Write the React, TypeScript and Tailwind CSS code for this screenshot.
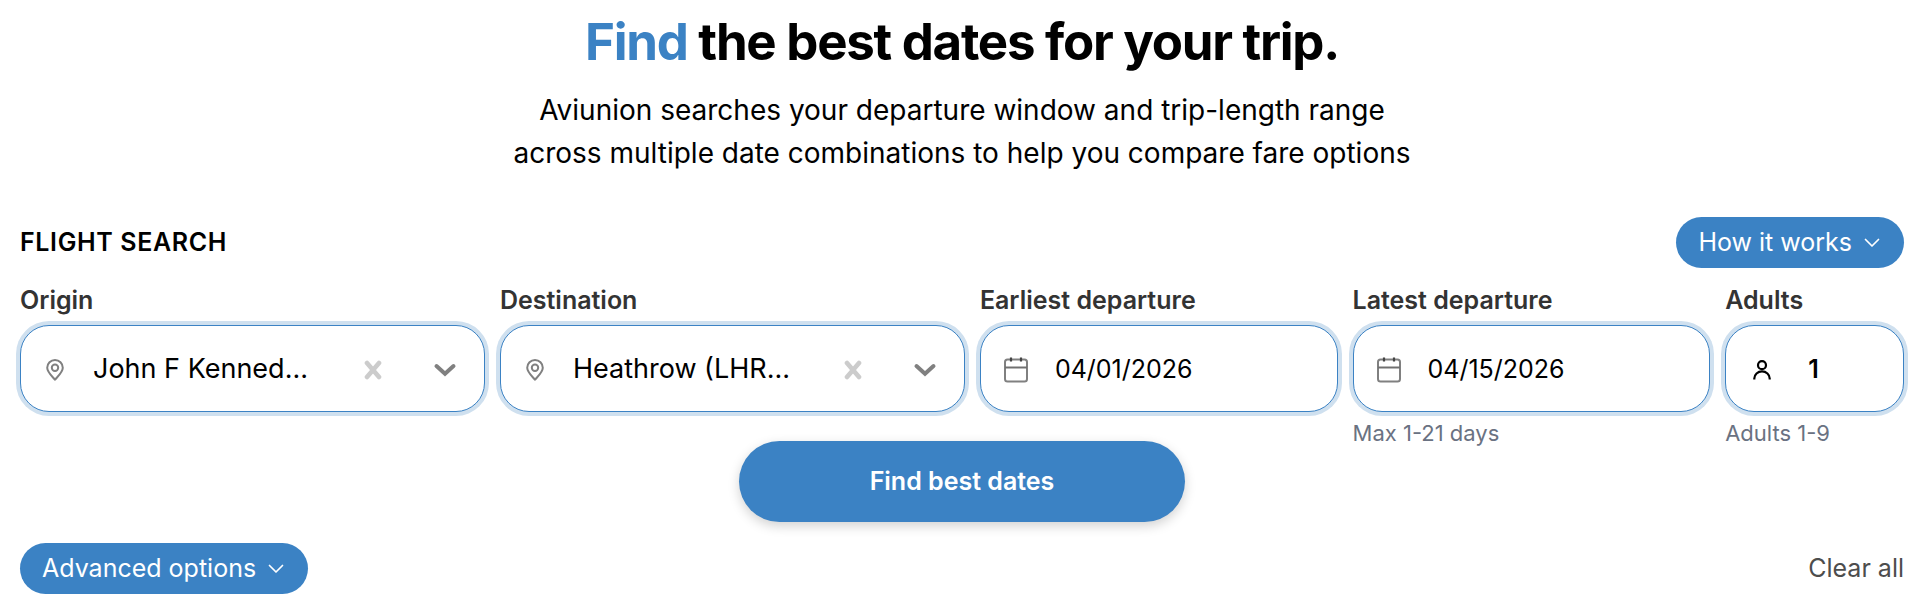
import { useState } from "react";

const FIELD =
  "flex h-[87px] items-center rounded-[29px] border border-[#3b82c4] bg-white pt-[2px] ring-4 ring-[#cfe0ef]";

const LABEL = "mb-[9px] block text-[25px] leading-8 font-semibold text-[#333333]";

const HINT = "mt-[9px] text-[22px] leading-6 text-gray-500";

const PILL =
  "flex h-[51px] items-center gap-3 rounded-full bg-[#3b82c4] pr-6 pl-[22px] text-[25px] text-white hover:bg-[#3474b0]";

function PinIcon() {
  return (
    <svg aria-hidden viewBox="0 0 18 22" className="h-[22px] w-[18px] shrink-0" fill="none" stroke="#808080" strokeWidth="2">
      <path d="M9 20.8C7.6 18.8 1.2 13.4 1.2 8.8a7.8 7.8 0 0 1 15.6 0C16.8 13.4 10.4 18.8 9 20.8Z" strokeLinejoin="round" />
      <circle cx="9" cy="8.8" r="3.2" />
    </svg>
  );
}

function CalendarIcon() {
  return (
    <svg aria-hidden viewBox="0 0 24 26" className="h-[26px] w-6 shrink-0" fill="none">
      <rect x="1" y="2.5" width="22" height="22" rx="2.5" stroke="#808080" strokeWidth="2" />
      <path d="M1 10.5h22" stroke="#707070" strokeWidth="2" />
      <path d="M7 0.5v4M17 0.5v4" stroke="#444444" strokeWidth="2.2" />
    </svg>
  );
}

function PersonIcon() {
  return (
    <svg aria-hidden viewBox="0 0 18 20" className="h-5 w-[18px] shrink-0" fill="none" stroke="#000000" strokeWidth="2.2">
      <circle cx="9" cy="5.2" r="4" />
      <path d="M1.3 19.4v-1a7.7 7 0 0 1 15.4 0v1" />
    </svg>
  );
}

function SmallChevron() {
  return (
    <svg aria-hidden viewBox="0 0 16 10" className="h-[10px] w-4 shrink-0" fill="none" stroke="currentColor" strokeWidth="1.7">
      <path d="M1.5 1.5 8 8l6.5-6.5" strokeLinecap="round" strokeLinejoin="round" />
    </svg>
  );
}

function AirportField({ id, label, value }: { id: string; label: string; value: string }) {
  const [selected, setSelected] = useState(value);

  return (
    <div className="min-w-0">
      <label htmlFor={id} className={LABEL}>
        {label}
      </label>
      <div className={`${FIELD} pr-[27px] pl-[25px]`}>
        <PinIcon />
        <select
          id={id}
          value={selected}
          onChange={(e) => setSelected(e.target.value)}
          className="ml-[29px] min-w-0 flex-1 appearance-none bg-transparent text-[27px] text-black outline-none"
        >
          <option value="" />
          <option value={value}>{value}</option>
        </select>
        <button type="button" aria-label={`Clear ${label}`} onClick={() => setSelected("")} className="shrink-0 px-1">
          <svg aria-hidden viewBox="0 0 18 20" className="h-5 w-[18px]" stroke="#cccccc" strokeWidth="4.6" strokeLinecap="round">
            <path d="M3 3 15 17M15 3 3 17" />
          </svg>
        </button>
        <svg
          aria-hidden
          viewBox="0 0 24 14"
          className="pointer-events-none ml-[47px] h-[14px] w-6 shrink-0"
          fill="none"
          stroke="#808080"
          strokeWidth="4"
        >
          <path d="M3.5 3 12 10.8 20.5 3" strokeLinecap="round" />
        </svg>
      </div>
    </div>
  );
}

function DateField({ id, label, value, hint }: { id: string; label: string; value: string; hint?: string }) {
  return (
    <div className="min-w-0">
      <label htmlFor={id} className={LABEL}>
        {label}
      </label>
      <div className={`${FIELD} pr-5 pl-[23px]`}>
        <CalendarIcon />
        <input id={id} type="text" defaultValue={value} className="ml-[27px] w-full min-w-0 bg-transparent text-[25px] text-black outline-none" />
      </div>
      {hint && <p className={HINT}>{hint}</p>}
    </div>
  );
}

export default function App() {
  return (
    <main className="bg-white pt-[10px] pr-[23px] pb-2 pl-5 font-[Inter,sans-serif] text-black">
      <header className="text-center">
        <h1 className="text-[51px] leading-[64px] font-bold tracking-tight">
          <span className="text-[#3b82c4]">Find</span> the best dates for your trip.
        </h1>
        <p className="mt-[15px] text-[28px] leading-[43px]">
          Aviunion searches your departure window and trip-length range
          <br />
          across multiple date combinations to help you compare fare options
        </p>
      </header>

      <form onSubmit={(e) => e.preventDefault()}>
        <div className="mt-[42px] flex items-center justify-between">
          <h2 className="text-[25px] font-semibold tracking-wide">FLIGHT SEARCH</h2>
          <button type="button" className={PILL}>
            How it works
            <SmallChevron />
          </button>
        </div>

        <div className="mt-4 grid grid-cols-[26fr_26fr_20fr_20fr_10fr] gap-[15px]">
          <AirportField id="origin" label="Origin" value="John F Kenned..." />
          <AirportField id="destination" label="Destination" value="Heathrow (LHR..." />
          <DateField id="earliest" label="Earliest departure" value="04/01/2026" />
          <DateField id="latest" label="Latest departure" value="04/15/2026" hint="Max 1-21 days" />
          <div className="min-w-0">
            <label htmlFor="adults" className={LABEL}>
              Adults
            </label>
            <div className={`${FIELD} pr-4 pl-[27px]`}>
              <PersonIcon />
              <input
                id="adults"
                type="text"
                inputMode="numeric"
                defaultValue="1"
                className="ml-[37px] w-full min-w-0 bg-transparent text-[25px] font-semibold text-black outline-none"
              />
            </div>
            <p className={HINT}>Adults 1-9</p>
          </div>
        </div>

        <div className="-mt-1 flex justify-center">
          <button
            type="submit"
            className="h-[81px] w-full max-w-[446px] rounded-full bg-[#3b82c4] text-[25px] font-semibold text-white shadow-[0_4px_12px_rgba(0,0,0,0.18)] hover:bg-[#3474b0]"
          >
            Find best dates
          </button>
        </div>

        <div className="mt-[21px] flex items-center justify-between">
          <button type="button" className={PILL}>
            Advanced options
            <SmallChevron />
          </button>
          <button type="button" className="text-[25px] text-[#4d4d4d]">
            Clear all
          </button>
        </div>
      </form>
    </main>
  );
}
